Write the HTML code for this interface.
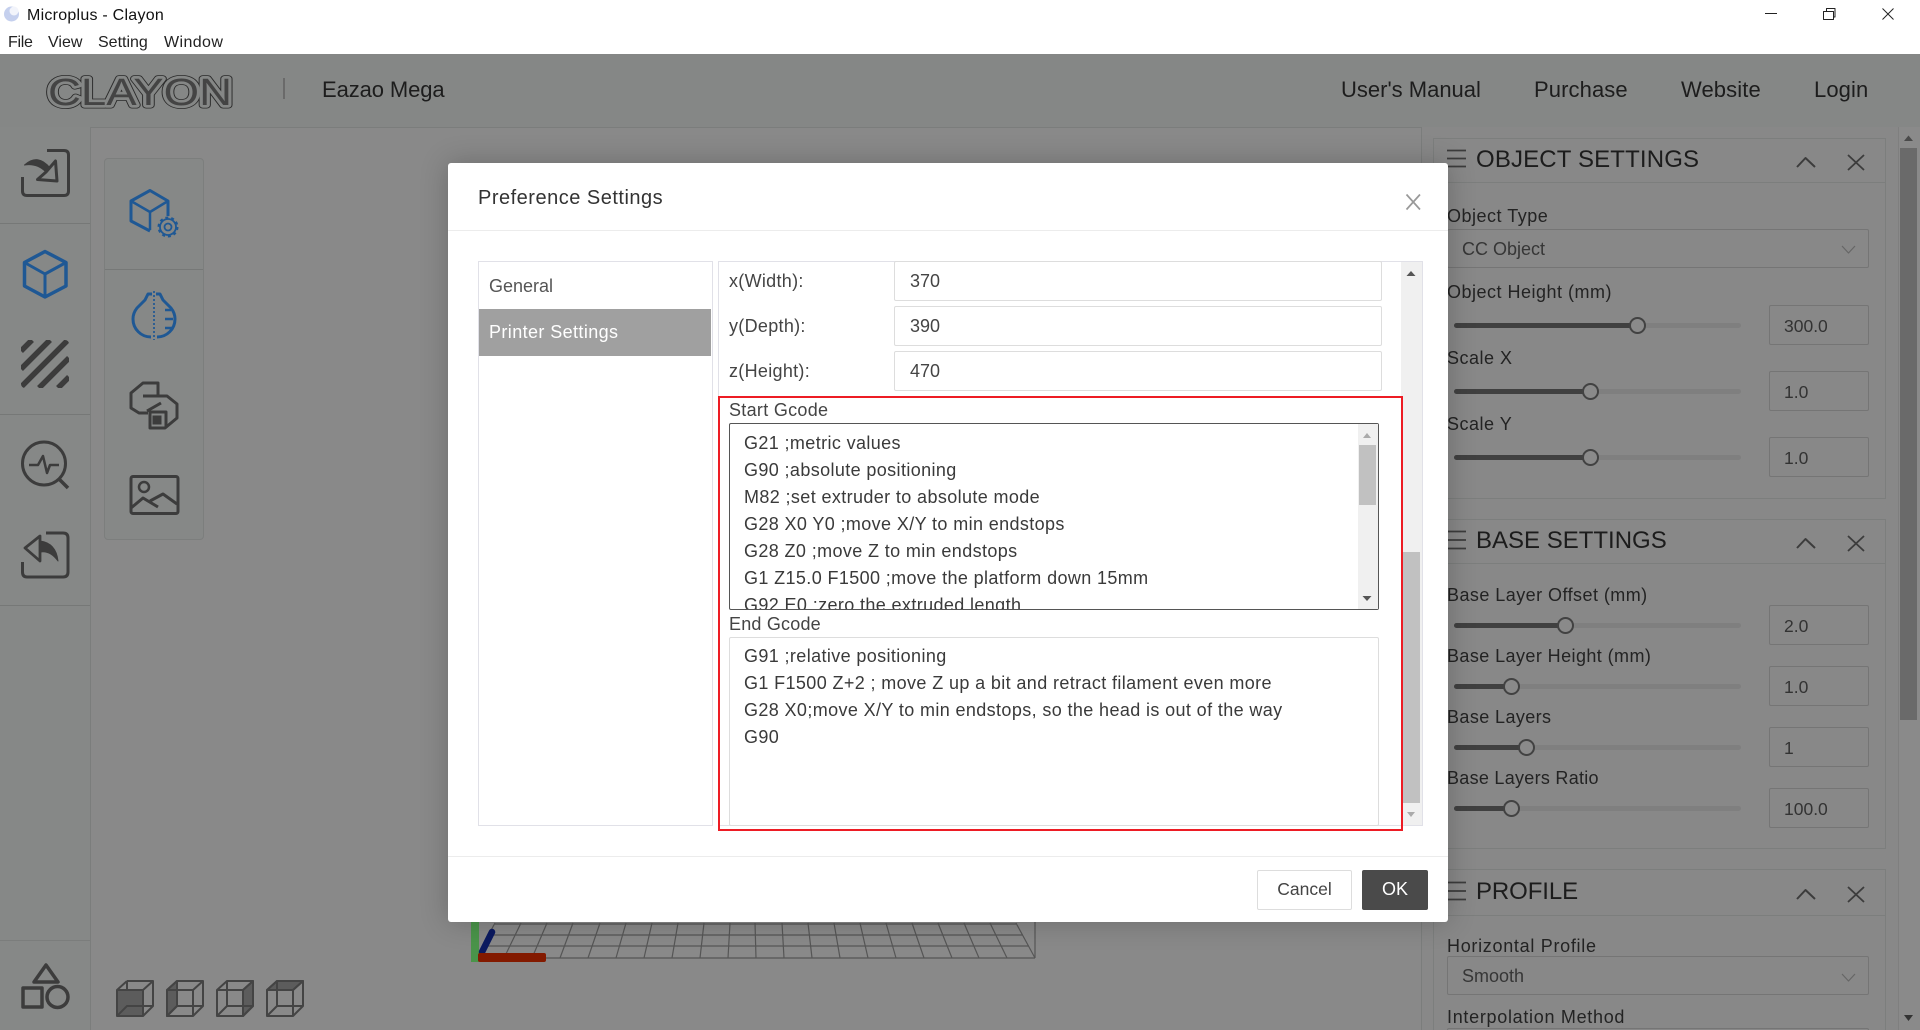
<!DOCTYPE html>
<html lang="en">
<head>
<meta charset="utf-8">
<title>Microplus - Clayon</title>
<style>
html,body{margin:0;padding:0;width:1920px;height:1030px;overflow:hidden;background:#898989;font-family:"Liberation Sans",Arial,sans-serif;}
#root{position:relative;width:1920px;height:1030px;overflow:hidden;background:#898989;}
.a{position:absolute;box-sizing:border-box;}
.t{position:absolute;white-space:nowrap;height:20px;line-height:20px;}
.bar{position:absolute;left:0;top:0;width:1920px;height:54px;background:#fff;border-bottom:1px solid #777;}
.menu{font-size:16px;color:#222;}
.hdr{position:absolute;left:0;top:54px;width:1920px;height:73px;background:#858786;border-bottom:1px solid #7b7d7c;}
.nav{font-size:22px;color:#1d1d1d;}
.pnl{position:absolute;left:1433px;width:453px;border:1px solid #7c7e7d;box-sizing:border-box;}
.ph{font-size:24px;color:#1c1c1c;}
.lb{font-size:18px;letter-spacing:.5px;color:#232323;}
.inp{position:absolute;left:1769px;width:100px;height:40px;border:1px solid #757575;border-radius:2px;box-sizing:border-box;}
.sel{position:absolute;left:1447px;width:422px;height:39px;border:1px solid #757575;border-radius:2px;box-sizing:border-box;}
.v{font-size:17.5px;color:#333;}
.tr{position:absolute;left:1454px;width:287px;height:5px;border-radius:3px;background:#7f7f7f;}
.fl{position:absolute;left:1454px;height:5px;border-radius:3px;background:#404040;}
.th{position:absolute;width:17px;height:17px;border-radius:50%;border:2.5px solid #424242;background:#8a8a8a;box-sizing:border-box;}
.modal{position:absolute;left:448px;top:163px;width:1000px;height:759px;background:#fff;border-radius:3px;box-shadow:0 0 28px rgba(0,0,0,.22);}
.fld{position:absolute;left:894px;width:488px;height:39px;background:#fff;border:1px solid #ddd;border-radius:2px;box-sizing:border-box;}
.m{font-size:18px;color:#444;letter-spacing:.3px;}
.val{font-size:18px;color:#444;}
.code{position:absolute;left:729px;width:650px;background:#fff;box-sizing:border-box;border-radius:2px;overflow:hidden;font-size:18px;line-height:27px;color:#3a3a3a;white-space:pre;letter-spacing:.38px;padding-left:14px;}
</style>
</head>
<body>
<div id="root">

<div class="bar"></div>
<div class="t" style="left:27px;top:6px;font-size:16px;color:#111;letter-spacing:.25px;">Microplus - Clayon</div>
<div class="t menu" style="left:8px;top:33px;letter-spacing:-.3px;">File</div>
<div class="t menu" style="left:48px;top:33px;">View</div>
<div class="t menu" style="left:98px;top:33px;">Setting</div>
<div class="t menu" style="left:164px;top:33px;letter-spacing:.4px;">Window</div>

<div class="hdr"></div>
<div class="t nav" style="left:322px;top:80px;letter-spacing:-.1px;">Eazao Mega</div>
<div class="t nav" style="left:1341px;top:80px;">User's Manual</div>
<div class="t nav" style="left:1534px;top:80px;letter-spacing:.1px;">Purchase</div>
<div class="t nav" style="left:1681px;top:80px;letter-spacing:.1px;">Website</div>
<div class="t nav" style="left:1814px;top:80px;letter-spacing:.1px;">Login</div>

<!-- left columns -->
<div class="a" style="left:0;top:127px;width:91px;height:903px;background:#868887;border-right:1px solid #7b7d7c;"></div>
<div class="a" style="left:0;top:223px;width:90px;height:1px;background:#767877;"></div>
<div class="a" style="left:0;top:414px;width:90px;height:1px;background:#767877;"></div>
<div class="a" style="left:0;top:605px;width:90px;height:1px;background:#767877;"></div>
<div class="a" style="left:0;top:940px;width:90px;height:1px;background:#7b7d7c;"></div>
<div class="a" style="left:104px;top:158px;width:100px;height:382px;background:#868887;border:1px solid #7c7e7d;border-radius:4px;"></div>
<div class="a" style="left:105px;top:269px;width:98px;height:1px;background:#767877;"></div>

<!-- right column -->
<div class="a" style="left:1421px;top:127px;width:477px;height:903px;border-left:1px solid #7b7d7c;background:#888;"></div>
<div class="a" style="left:1898px;top:127px;width:22px;height:903px;background:#8a8a8a;border-left:1px solid #7f7f7f;"></div>
<div class="a" style="left:1900px;top:148px;width:17px;height:572px;background:#6a6a6a;"></div>

<div class="pnl" style="top:138px;height:361px;"></div>
<div class="a" style="left:1434px;top:182px;width:451px;height:1px;background:#7c7e7d;"></div>
<div class="t ph" style="left:1476px;top:150px;letter-spacing:.15px;">OBJECT SETTINGS</div>
<div class="t lb" style="left:1447px;top:206px;">Object Type</div>
<div class="sel" style="top:229px;"></div>
<div class="t" style="left:1462px;top:239px;font-size:18px;color:#363636;">CC Object</div>
<div class="t lb" style="left:1447px;top:282px;">Object Height (mm)</div>
<div class="tr" style="top:323px;"></div><div class="fl" style="top:323px;width:180px;"></div><div class="th" style="left:1629px;top:317px;"></div>
<div class="inp" style="top:305px;"></div><div class="t v" style="left:1784px;top:316px;">300.0</div>
<div class="t lb" style="left:1447px;top:348px;">Scale X</div>
<div class="tr" style="top:389px;"></div><div class="fl" style="top:389px;width:134px;"></div><div class="th" style="left:1582px;top:383px;"></div>
<div class="inp" style="top:371px;"></div><div class="t v" style="left:1784px;top:382px;">1.0</div>
<div class="t lb" style="left:1447px;top:414px;">Scale Y</div>
<div class="tr" style="top:455px;"></div><div class="fl" style="top:455px;width:134px;"></div><div class="th" style="left:1582px;top:449px;"></div>
<div class="inp" style="top:437px;"></div><div class="t v" style="left:1784px;top:448px;">1.0</div>

<div class="pnl" style="top:519px;height:330px;"></div>
<div class="a" style="left:1434px;top:563px;width:451px;height:1px;background:#7c7e7d;"></div>
<div class="t ph" style="left:1476px;top:531px;">BASE SETTINGS</div>
<div class="t lb" style="left:1447px;top:585px;letter-spacing:.45px;">Base Layer Offset (mm)</div>
<div class="tr" style="top:623px;"></div><div class="fl" style="top:623px;width:110px;"></div><div class="th" style="left:1557px;top:617px;"></div>
<div class="inp" style="top:605px;"></div><div class="t v" style="left:1784px;top:616px;">2.0</div>
<div class="t lb" style="left:1447px;top:646px;letter-spacing:.42px;">Base Layer Height (mm)</div>
<div class="tr" style="top:684px;"></div><div class="fl" style="top:684px;width:56px;"></div><div class="th" style="left:1503px;top:678px;"></div>
<div class="inp" style="top:666px;"></div><div class="t v" style="left:1784px;top:677px;">1.0</div>
<div class="t lb" style="left:1447px;top:707px;letter-spacing:.4px;">Base Layers</div>
<div class="tr" style="top:745px;"></div><div class="fl" style="top:745px;width:70px;"></div><div class="th" style="left:1518px;top:739px;"></div>
<div class="inp" style="top:727px;"></div><div class="t v" style="left:1784px;top:738px;">1</div>
<div class="t lb" style="left:1447px;top:768px;letter-spacing:.28px;">Base Layers Ratio</div>
<div class="tr" style="top:806px;"></div><div class="fl" style="top:806px;width:56px;"></div><div class="th" style="left:1503px;top:800px;"></div>
<div class="inp" style="top:788px;"></div><div class="t v" style="left:1784px;top:799px;">100.0</div>

<div class="pnl" style="top:869px;height:170px;"></div>
<div class="a" style="left:1434px;top:915px;width:451px;height:1px;background:#7c7e7d;"></div>
<div class="t ph" style="left:1476px;top:882px;letter-spacing:-.1px;">PROFILE</div>
<div class="t lb" style="left:1447px;top:936px;letter-spacing:.7px;">Horizontal Profile</div>
<div class="sel" style="top:956px;"></div>
<div class="t" style="left:1462px;top:966px;font-size:18px;color:#363636;">Smooth</div>
<div class="t lb" style="left:1447px;top:1007px;letter-spacing:.7px;">Interpolation Method</div>
<div class="sel" style="top:1028px;"></div>

<!-- icon / scene layer -->
<svg class="a" style="left:0;top:0;" width="1920" height="1030" viewBox="0 0 1920 1030" fill="none" stroke-linejoin="round">
  <defs>
    <clipPath id="hc"><rect x="21" y="340" width="48" height="48" rx="4"/></clipPath>
  </defs>
  <!-- title bar icons -->
  <circle cx="11.5" cy="14" r="7.5" fill="#c5d0ee"/>
  <circle cx="14" cy="11" r="4.5" fill="#f2f4fb"/>
  <path d="M1765 13.5H1777" stroke="#222" stroke-width="1"/>
  <path d="M1823.5 11.500H1833.5V19.500H1823.500Z M1826.500 11V8.500H1835V17H1833.500" stroke="#222" stroke-width="1"/>
  <path d="M1882.500 8.500L1893.500 19.500M1893.500 8.500L1882.500 19.500" stroke="#222" stroke-width="1"/>

  <!-- logo -->
  <g font-family="'Liberation Sans',Arial,sans-serif" font-size="38">
    <text x="48" y="105" textLength="184" lengthAdjust="spacingAndGlyphs" fill="#2b2b2b" stroke="#2b2b2b" stroke-width="7">CLAYON</text>
    <text x="48" y="105" textLength="184" lengthAdjust="spacingAndGlyphs" fill="#858786" stroke="#858786" stroke-width="5.400">CLAYON</text>
    <text x="48" y="105" textLength="184" lengthAdjust="spacingAndGlyphs" fill="#444" stroke="#858786" stroke-width=".9" paint-order="stroke">CLAYON</text>
  </g>
  <path d="M284 78V99" stroke="#6a6a6a" stroke-width="2"/>

  <!-- left column icons -->
  <g stroke="#3c3c3c" stroke-width="3">
    <path d="M47 150.500H64Q68.500 150.500 68.500 155V191Q68.500 195.500 64 195.500H27Q22.500 195.500 22.500 191V177"/>
    <path d="M24.500 165Q38 153 50 168L46 172Q37 163 24.500 165Z" fill="#3c3c3c" stroke-width="1"/>
    <path d="M55.500 161L57 181L37.500 179.500L46 172Z" stroke-width="3"/>
  </g>
  <g stroke="#1f5894" stroke-width="3.500">
    <path d="M45 251.500L66 262.500V286L45 297L24.500 286V262.500Z"/>
    <path d="M24.500 262.500L45 274L66 262.500M45 274V297" stroke-width="3"/>
  </g>
  <g clip-path="url(#hc)" stroke="#3c3c3c" stroke-width="5.500">
    <path d="M32 340L21 351M50 340L21 369M68 340L21 387M69 358L39 388M69 377L58 388"/>
  </g>
  <g stroke="#3c3c3c" stroke-width="3">
    <circle cx="44" cy="463.500" r="21.500"/>
    <path d="M59 479L68 488" stroke-width="3.500"/>
    <path d="M29 465H38L43 456L47 473L50 465H59" stroke-width="2.500"/>
  </g>
  <g stroke="#3c3c3c" stroke-width="3">
    <path d="M46 533H63Q68 533 68 538V572Q68 577 63 577H27Q22.500 577 22.500 572V562"/>
    <path d="M40 536L25 548L40 561V553V542Z" stroke-width="2.800"/>
    <path d="M40 541Q56 543 58 561Q50 550 40 552Z" fill="#3c3c3c" stroke-width="1"/>
  </g>
  <!-- shapes -->
  <g stroke="#3c3c3c" stroke-width="3.500">
    <path d="M46 965L58 982H34Z"/>
    <rect x="23" y="988" width="19" height="19"/>
    <circle cx="57.500" cy="997" r="10.500"/>
  </g>

  <!-- tool panel icons -->
  <g stroke="#1f5894" stroke-width="3">
    <path d="M168 216V201L150 190.500L131 201V221L150 231"/>
    <path d="M131 201L150 212L168 201M150 212V230" stroke-width="2.500"/>
    <circle cx="168" cy="227" r="3.500" stroke-width="1.800"/>
    <circle cx="168" cy="227" r="8" stroke-width="1.800"/>
    <circle cx="168" cy="227" r="9.500" stroke-width="2" stroke-dasharray="3 2.970"/>
    <path d="M152 294H148L145 300L137 308Q133 313 133 319C133 329 141 337 151 337M156 294H160L163 300L171 308Q175 313 175 319C175 329 167 337 157 337" stroke-width="3"/>
    <path d="M154 291V340" stroke-width="1.700" stroke-dasharray="2 2"/>
    <path d="M165 310H171M165 319H173M165 328H172" stroke-width="2.500"/>
  </g>
  <g stroke="#3c3c3c" stroke-width="3">
    <path d="M158 396V383H143L131 393V408L139 413H148"/>
    <path d="M143 396H167L177 404V418L165 428H150V412H166V428"/>
    <path d="M147 411L161 403" stroke-width="3"/>
    <rect x="152.500" y="415.500" width="9" height="9" fill="#3c3c3c" stroke="none"/>
    <rect x="131" y="476.500" width="47" height="37" rx="2"/>
    <circle cx="144" cy="487" r="5" stroke-width="2.500"/>
    <path d="M131 508L143 498L158 507M150 501L163 494L177 504"/>
  </g>

  <!-- view cubes -->
  <g stroke="#444" stroke-width="2">
    <g>
      <rect x="117" y="990" width="26" height="26" fill="#5c5c5c"/>
      <path d="M127 981H153V1006H143M127 981V990M117 990L127 981M143 990L153 981M117 1016L127 1006H143M143 1016L153 1006"/>
    </g>
    <g transform="translate(50,0)">
      <path d="M117 990L127 981V1006L117 1016Z" fill="#5c5c5c"/>
      <path d="M117 990H143V1016H117ZM127 981H153V1006H127V981ZM117 990L127 981M143 990L153 981M117 1016L127 1006M143 1016L153 1006"/>
    </g>
    <g transform="translate(100,0)">
      <path d="M143 990L153 981V1006L143 1016Z" fill="#5c5c5c"/>
      <path d="M117 990H143V1016H117ZM127 981H153V1006H127V981ZM117 990L127 981M143 990L153 981M117 1016L127 1006M143 1016L153 1006"/>
    </g>
    <g transform="translate(150,0)">
      <path d="M117 990L127 981H153L143 990Z" fill="#5c5c5c"/>
      <path d="M117 990H143V1016H117ZM127 981H153V1006H127V981ZM117 990L127 981M143 990L153 981M117 1016L127 1006M143 1016L153 1006"/>
    </g>
  </g>

  <!-- panel header icons -->
  <g stroke="#3c3c3c" stroke-width="1.800">
    <path d="M1447 150.500H1466M1447 158.500H1466M1447 166.500H1466"/>
    <path d="M1797 167L1805.500 158L1815 167" stroke-width="2"/>
    <path d="M1848 155L1864 170M1864 155L1848 170"/>
    <path d="M1447 531.500H1466M1447 540H1466M1447 548.500H1466"/>
    <path d="M1797 548L1805.500 539L1815 548" stroke-width="2"/>
    <path d="M1848 536L1864 551M1864 536L1848 551"/>
    <path d="M1447 882.500H1466M1447 891H1466M1447 899.500H1466"/>
    <path d="M1797 899L1805.500 890L1815 899" stroke-width="2"/>
    <path d="M1848 887L1864 902M1864 887L1848 902"/>
  </g>
  <path d="M1842 246L1848.500 253L1855 246M1842 974L1848.500 981L1855 974" stroke="#666" stroke-width="1.200"/>
  <path d="M1904 141L1908.500 135.500L1913 141Z" fill="#4a4a4a"/>
  <path d="M1904 1015L1908.500 1021L1913 1015Z" fill="#333"/>

  <!-- 3D grid -->
  <g stroke="#565656" stroke-width="1.200">
    <path d="M495 924H1016M489 935H1023M483 946H1029M476 958H1035M1035 922V958"/>
    <path d="M495 923L476 958M521 923L504 958M547 923L532 958M573 923L560 958M600 923L588 958M626 923L616 958M652 923L644 958M678 923L672 958M704 923L700 958M730 923L728 958M755 923L756 958M782 923L784 958M808 923L812 958M834 923L840 958M860 923L868 958M886 923L896 958M912 923L924 958M938 923L952 958M964 923L979 958M990 923L1007 958M1016 923L1035 958"/>
  </g>
  <rect x="471" y="915" width="8" height="47" fill="#4a944a"/>
  <path d="M482 952L492 932" stroke="#0b1a60" stroke-width="6.500" stroke-linecap="round"/>
  <rect x="478" y="953" width="68" height="9" rx="2" fill="#831a00"/>
</svg>

<!-- MODAL -->
<div class="modal"></div>
<div class="a" style="left:448px;top:230px;width:1000px;height:1px;background:#ececec;"></div>
<div class="t" style="left:478px;top:188px;font-size:20px;color:#333;letter-spacing:.5px;">Preference Settings</div>
<svg class="a" style="left:1405px;top:193px;" width="17" height="18" fill="none" stroke="#999" stroke-width="1.700"><path d="M1.500 1.500L15 16.500M15 1.500L1.500 16.500"/></svg>

<div class="a" style="left:478px;top:261px;width:235px;height:565px;border:1px solid #e1e1e8;background:#fff;"></div>
<div class="t" style="left:489px;top:276px;font-size:18px;color:#555;">General</div>
<div class="a" style="left:479px;top:309px;width:232px;height:47px;background:#a0a0a0;"></div>
<div class="t" style="left:489px;top:322px;font-size:18px;color:#fff;letter-spacing:.4px;">Printer Settings</div>

<div class="a" style="left:718px;top:261px;width:705px;height:565px;border:1px solid #e1e1e8;background:#fff;"></div>
<div class="a" style="left:1401px;top:262px;width:21px;height:563px;background:#f0f0f0;"></div>
<div class="a" style="left:1403px;top:552px;width:17px;height:251px;background:#c1c1c1;"></div>
<svg class="a" style="left:1405px;top:270px;" width="12" height="7"><path d="M1.500 6L6 1L10.500 6Z" fill="#555"/></svg>
<svg class="a" style="left:1405px;top:811px;" width="12" height="7"><path d="M2 1L6 6L10 1Z" fill="#aaa"/></svg>

<div class="t m" style="left:729px;top:271px;">x(Width):</div>
<div class="t m" style="left:729px;top:316px;">y(Depth):</div>
<div class="t m" style="left:729px;top:361px;">z(Height):</div>
<div class="fld" style="top:261px;height:40px;"></div>
<div class="fld" style="top:306px;height:40px;"></div>
<div class="fld" style="top:351px;height:40px;"></div>
<div class="t val" style="left:910px;top:271px;">370</div>
<div class="t val" style="left:910px;top:316px;">390</div>
<div class="t val" style="left:910px;top:361px;">470</div>

<div class="t m" style="left:729px;top:399.500px;letter-spacing:.3px;">Start Gcode</div>
<div class="code" style="top:423px;height:187px;border:1px solid #555;padding-top:6px;">G21 ;metric values
G90 ;absolute positioning
M82 ;set extruder to absolute mode
G28 X0 Y0 ;move X/Y to min endstops
G28 Z0 ;move Z to min endstops
G1 Z15.0 F1500 ;move the platform down 15mm
G92 E0 ;zero the extruded length</div>
<div class="a" style="left:1358px;top:424px;width:20px;height:185px;background:#f0f0f0;"></div>
<div class="a" style="left:1359px;top:445px;width:17px;height:60px;background:#c1c1c1;"></div>
<svg class="a" style="left:1361px;top:432px;" width="12" height="7"><path d="M2 6L6 1L10 6Z" fill="#aaa"/></svg>
<svg class="a" style="left:1361px;top:595px;" width="12" height="7"><path d="M1.500 1L6 6L10.500 1Z" fill="#555"/></svg>

<div class="t m" style="left:729px;top:614px;letter-spacing:.2px;">End Gcode</div>
<div class="code" style="top:637px;height:189px;border:1px solid #ddd;padding-top:5px;">G91 ;relative positioning
G1 F1500 Z+2 ; move Z up a bit and retract filament even more
G28 X0;move X/Y to min endstops, so the head is out of the way
G90</div>

<div class="a" style="left:718px;top:396px;width:685px;height:435px;border:2px solid #ed1c24;"></div>

<div class="a" style="left:448px;top:856px;width:1000px;height:1px;background:#ececec;"></div>
<div class="a" style="left:1257px;top:870px;width:95px;height:40px;background:#fff;border:1px solid #ddd;border-radius:2px;"></div>
<div class="t" style="left:1257px;top:879px;width:95px;text-align:center;font-size:17.500px;color:#444;">Cancel</div>
<div class="a" style="left:1362px;top:870px;width:66px;height:40px;background:#4a4a4a;border-radius:2px;"></div>
<div class="t" style="left:1362px;top:879px;width:66px;text-align:center;font-size:18px;color:#fff;">OK</div>

</div>
</body>
</html>
